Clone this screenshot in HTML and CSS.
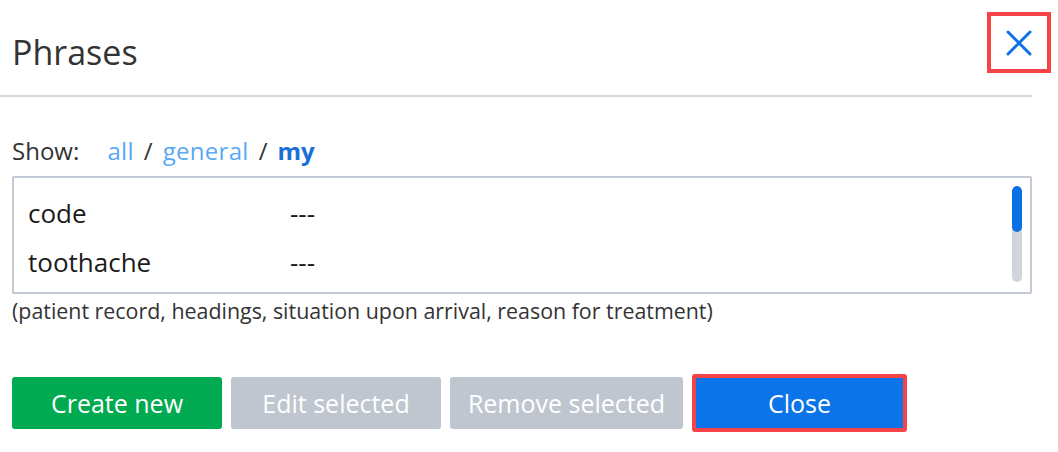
FILE: index.html
```html
<!DOCTYPE html>
<html lang="en">
<head>
    <meta charset="UTF-8">
    <meta name="viewport" content="width=device-width, initial-scale=1.0">
    <title>Phrases</title>
    <link rel="stylesheet" href="styles.css">
</head>
<body>
<div class="modal">
    <div class="modal-header">
        <h1>Phrases</h1>
        <button class="close-x" aria-label="Close">
            <svg width="28" height="28" viewBox="0 0 28 28">
                <path d="M3 3 L25 25 M25 3 L3 25" stroke="#0a72e6" stroke-width="3" stroke-linecap="round" fill="none"/>
            </svg>
        </button>
    </div>

    <div class="modal-body">
        <div class="filter">
            <span class="filter-label">Show:</span>
            <a href="#" class="filter-link">all</a><span class="sep">/</span><a href="#" class="filter-link">general</a><span class="sep">/</span><a href="#" class="filter-link active">my</a>
        </div>

        <div class="phrase-list">
            <div class="rows">
                <div class="row"><span class="name">code</span><span class="text">---</span></div>
                <div class="row"><span class="name">toothache</span><span class="text">---</span></div>
            </div>
            <div class="scrollbar"><div class="thumb"></div></div>
        </div>

        <p class="hint">(patient record, headings, situation upon arrival, reason for treatment)</p>
    </div>

    <div class="actions">
        <button class="btn btn-green">Create new</button>
        <button class="btn btn-disabled">Edit selected</button>
        <button class="btn btn-disabled btn-wide">Remove selected</button>
        <button class="btn btn-blue btn-marked">Close</button>
    </div>
</div>
</body>
</html>
```

FILE: styles.css
```css
body {
    margin: 0;
    padding: 0;
    background: #ffffff;
    font-family: 'Open Sans', 'Noto Sans', sans-serif;
    color: #333333;
}

.modal {
    width: 1058px;
}

.modal-header {
    width: 1032px;
    height: 95px;
    border-bottom: 2px solid #d5d9de;
    display: flex;
    align-items: flex-start;
    justify-content: space-between;
}

h1 {
    margin: 29px 0 0 12px;
    font-size: 34px;
    font-weight: 400;
    line-height: 46px;
    color: #333333;
}

.close-x {
    margin: 12px -19px 0 0;
    width: 64px;
    height: 61px;
    padding: 0;
    border: 4px solid #f44447;
    background: #ffffff;
    display: flex;
    align-items: center;
    justify-content: center;
    cursor: pointer;
}

.modal-body {
    padding: 0 26px 0 12px;
}

.filter {
    margin-top: 34px;
    height: 40px;
    line-height: 40px;
    font-size: 24px;
    color: #333333;
}

.filter-label {
    margin-right: 22px;
}

.sep {
    margin: 0 10px;
}

.filter-link {
    color: #5aa9f5;
    text-decoration: none;
    letter-spacing: 0.3px;
}

.filter-link.active {
    color: #1a6fd8;
    font-weight: 700;
    letter-spacing: 0;
}

.phrase-list {
    margin-top: 5px;
    border: 2px solid #c3cad3;
    border-radius: 2px;
    display: flex;
    justify-content: space-between;
    padding: 8px 8px 9px 14px;
    box-sizing: border-box;
    height: 118px;
}

.rows {
    display: flex;
    flex-direction: column;
    padding-top: 3px;
}

.row {
    display: flex;
    height: 49px;
    line-height: 49px;
    font-size: 26px;
    color: #1b1b1b;
}

.row .name {
    width: 262px;
}

.scrollbar {
    width: 10px;
    height: 96px;
    border-radius: 5px;
    background: #d0d5db;
    overflow: hidden;
}

.thumb {
    height: 46px;
    border-radius: 5px;
    background: #0a70e4;
}

.hint {
    margin: 2px 0 0;
    font-size: 21.4px;
    line-height: 30px;
    color: #333333;
}

.actions {
    margin-top: 48px;
    padding-left: 12px;
    display: flex;
    align-items: center;
    gap: 9px;
}

.btn {
    width: 210px;
    height: 52px;
    border: none;
    border-radius: 3px;
    font-family: inherit;
    font-size: 25px;
    color: #ffffff;
    cursor: pointer;
}

.btn-wide {
    width: 233px;
}

.btn-green {
    background: #00aa50;
}

.btn-disabled {
    background: #bfc6cf;
}

.btn-blue {
    background: #0a74e8;
}

.btn-marked {
    width: 215px;
    height: 58px;
    border: 4px solid #f44447;
}
```
